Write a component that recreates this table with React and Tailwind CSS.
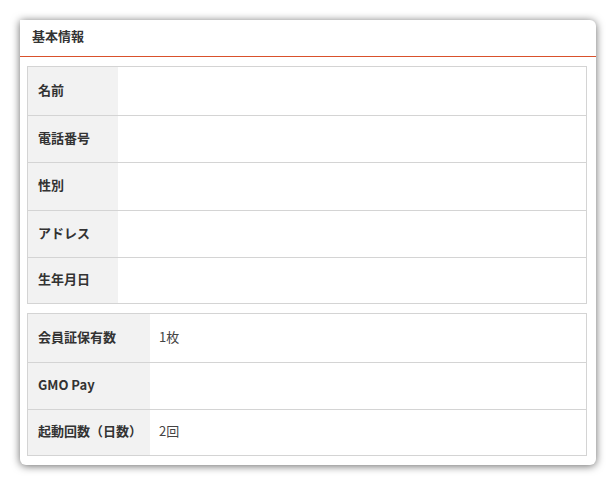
import React from "react";

const profileRows = ["名前", "電話番号", "性別", "アドレス", "生年月日"];

const usageRows = [
  { label: "会員証保有数", value: "1枚" },
  { label: "GMO Pay", value: "" },
  { label: "起動回数（日数）", value: "2回" },
];

const InfoTable = ({ rows, labelWidth, heights }) => (
  <div className="border border-[#d4d4d4]">
    {rows.map((row, i) => (
      <div
        key={row.label}
        className={`flex ${i > 0 ? "border-t border-[#d4d4d4]" : ""}`}
        style={{ height: heights[i] }}
      >
        <div
          className="flex items-center bg-[#f2f2f2] pb-[4px] pl-[10px] text-[13px] leading-none font-bold text-[#333]"
          style={{ width: labelWidth }}
        >
          {row.label}
        </div>
        <div className="flex flex-1 items-center pb-[4px] pl-[9px] text-[13px] leading-none text-[#444]">
          {row.value}
        </div>
      </div>
    ))}
  </div>
);

export default function App() {
  return (
    <div className="min-h-[486px] w-[616px] bg-white pt-[20px] pl-[20px] font-['Noto_Sans_CJK_JP','Noto_Sans',sans-serif]">
      <div className="w-[576px] rounded-md rounded-tl-none bg-white pb-[9px] shadow-[0_1px_9px_rgba(0,0,0,0.6)]">
        <div className="flex h-[36px] items-center pb-[6px] pl-[12px] text-[13px] leading-none font-bold text-[#333]">
          基本情報
        </div>
        <div className="h-px bg-[#d9512c]" />
        <div className="ml-[7px] mr-[9px] mt-[9px] flex flex-col gap-[9px]">
          <InfoTable
            rows={profileRows.map((label) => ({ label, value: "" }))}
            labelWidth={90}
            heights={[48, 47, 48, 47, 46]}
          />
          <InfoTable rows={usageRows} labelWidth={122} heights={[48, 47, 46]} />
        </div>
      </div>
    </div>
  );
}
